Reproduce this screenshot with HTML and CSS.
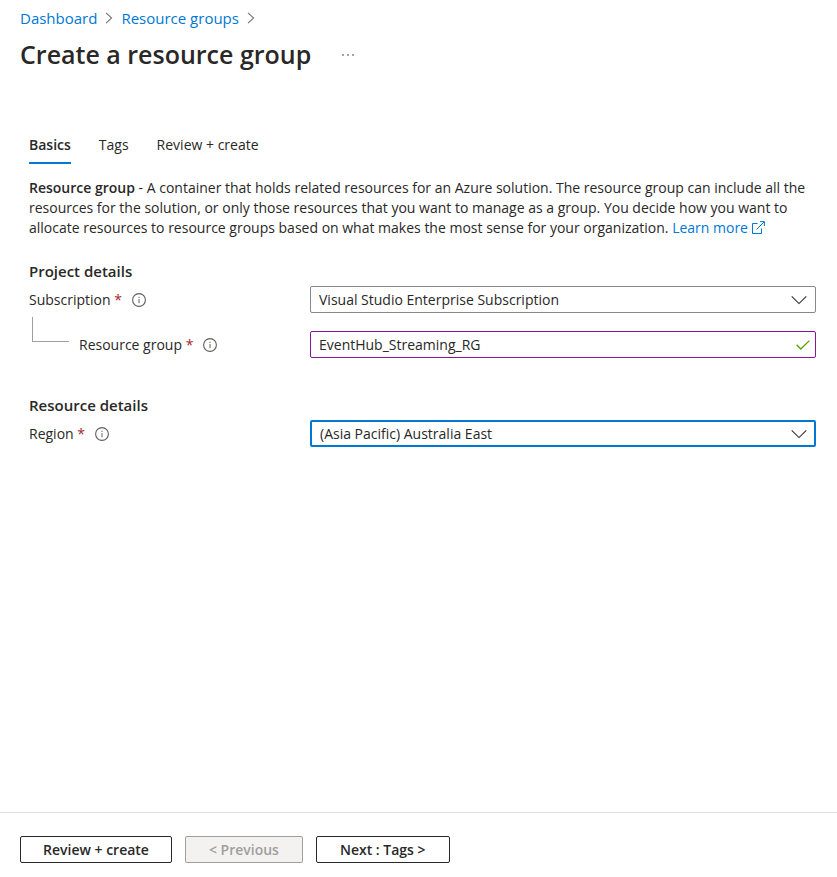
FILE: index.html
```html
<!DOCTYPE html>
<html lang="en">
<head>
    <meta charset="utf-8">
    <meta name="viewport" content="width=device-width, initial-scale=1">
    <title>Create a resource group</title>
    <link rel="stylesheet" href="styles.css">
</head>
<body>
    <!-- Shared icon shapes -->
    <svg class="icon-defs" aria-hidden="true">
        <symbol id="icon-info" viewBox="0 0 14 14">
            <circle cx="7" cy="7" r="6.4" fill="none" stroke="#605e5c" stroke-width="1.1"/>
            <path d="M7 5.9v4.3M7 3.7v1.3" fill="none" stroke="#8a8886" stroke-width="1.3"/>
        </symbol>
        <symbol id="icon-down" viewBox="0 0 16 10">
            <path d="M.7 1.4 8 8.6 15.3 1.4" fill="none" stroke="#323130" stroke-width="1.1"/>
        </symbol>
        <symbol id="icon-next" viewBox="0 0 8 12">
            <path d="M1 .8 6.6 6 1 11.2" fill="none" stroke="#797775" stroke-width="1.1"/>
        </symbol>
    </svg>

    <header class="page-header">
        <nav class="breadcrumb" aria-label="Breadcrumb">
            <a href="#">Dashboard</a>
            <svg class="icon-next"><use href="#icon-next"/></svg>
            <a href="#">Resource groups</a>
            <svg class="icon-next"><use href="#icon-next"/></svg>
        </nav>
        <div class="title-bar">
            <h1>Create a resource group</h1>
            <button type="button" class="more" aria-label="More actions">
                <svg width="14" height="4" viewBox="0 0 14 4" fill="#323130">
                    <circle cx="2" cy="3" r=".8"/>
                    <circle cx="7" cy="3" r=".8"/>
                    <circle cx="12" cy="3" r=".8"/>
                </svg>
            </button>
        </div>
    </header>

    <main class="content">
        <nav class="tabs">
            <a href="#" class="tab active">Basics</a>
            <a href="#" class="tab">Tags</a>
            <a href="#" class="tab">Review + create</a>
        </nav>

        <p class="intro"><strong>Resource group</strong> - A container that holds related resources for an Azure solution. The resource group can include all the resources for the solution, or only those resources that you want to manage as a group. You decide how you want to allocate resources to resource groups based on what makes the most sense for your organization. <a href="#">Learn more <svg class="icon-external" viewBox="0 0 13 13"><path d="M5.5 2.5h-5v10h9v-5M8 .6h4.4V5M12.2.8 4.5 8.5" fill="none" stroke="#0078d4"/></svg></a></p>

        <form id="resourceGroupForm">
            <h2>Project details</h2>
            <div class="row">
                <div class="row-label">
                    <label for="subscription">Subscription <span class="required">*</span></label>
                    <svg class="icon-info"><use href="#icon-info"/></svg>
                </div>
                <div class="field">
                    <select id="subscription" name="subscription">
                        <option>Visual Studio Enterprise Subscription</option>
                    </select>
                    <svg class="icon-down"><use href="#icon-down"/></svg>
                </div>
            </div>
            <div class="row child">
                <div class="row-label">
                    <span class="connector"></span>
                    <label for="resourceGroup">Resource group <span class="required">*</span></label>
                    <svg class="icon-info"><use href="#icon-info"/></svg>
                </div>
                <div class="field">
                    <input type="text" id="resourceGroup" name="resourceGroup" value="EventHub_Streaming_RG" class="changed">
                    <svg class="icon-check" viewBox="0 0 14 10"><path d="M.6 4.8 4.8 9 13.4.6" fill="none" stroke="#57a300" stroke-width="1.3"/></svg>
                </div>
            </div>

            <h2 class="section">Resource details</h2>
            <div class="row">
                <div class="row-label">
                    <label for="region">Region <span class="required">*</span></label>
                    <svg class="icon-info"><use href="#icon-info"/></svg>
                </div>
                <div class="field">
                    <select id="region" name="region" class="focused">
                        <option>(Asia Pacific) Australia East</option>
                    </select>
                    <svg class="icon-down"><use href="#icon-down"/></svg>
                </div>
            </div>
        </form>
    </main>

    <footer class="actions">
        <button type="submit" form="resourceGroupForm" class="review">Review + create</button>
        <button type="button" class="previous" disabled>&lt; Previous</button>
        <button type="button" class="next">Next : Tags &gt;</button>
    </footer>
</body>
</html>
```

FILE: styles.css
```css
* {
    box-sizing: border-box;
}

body {
    display: flex;
    flex-direction: column;
    min-height: 100vh;
    margin: 0;
    background: #fff;
    color: #292827;
    font-family: "Segoe UI", "Open Sans", "Noto Sans", sans-serif;
    font-size: 14px;
    line-height: 20px;
}

a {
    color: #0078d4;
    text-decoration: none;
}

svg {
    flex: none;
}

.icon-defs {
    position: absolute;
    width: 0;
    height: 0;
}

/* Header */
.page-header {
    padding: 8px 20px 0;
}

.breadcrumb {
    display: flex;
    align-items: center;
    gap: 8px;
    font-size: 15px;
}

.icon-next {
    width: 8px;
    height: 12px;
}

.title-bar {
    display: flex;
    align-items: center;
    gap: 28px;
    margin-top: 8px;
}

h1 {
    margin: 0;
    font-size: 25px;
    font-weight: 600;
    line-height: 36px;
}

.more {
    display: flex;
    padding: 4px 2px;
    border: none;
    background: none;
}

/* Tabs and form */
.content {
    flex: 1;
    padding: 63px 21px 24px 29px;
}

.tabs {
    display: flex;
    gap: 28px;
}

.tab {
    padding-bottom: 7px;
    border-bottom: 2px solid transparent;
    color: #292827;
}

.tab.active {
    border-bottom-color: #0078d4;
    font-weight: 600;
}

.intro {
    margin: 14px 0 23px;
}

strong {
    font-weight: 600;
}

.icon-external {
    width: 13px;
    height: 13px;
    vertical-align: -1px;
}

h2 {
    margin: 0 0 5px;
    font-size: 15px;
    font-weight: 600;
    line-height: 20px;
}

h2.section {
    margin-top: 37px;
}

.row {
    display: grid;
    grid-template-columns: 281px 1fr;
    align-items: center;
}

.row.child {
    margin-top: 18px;
}

.row-label {
    display: flex;
    align-items: center;
    gap: 10px;
}

.required {
    color: #a4262c;
}

.icon-info {
    width: 14px;
    height: 14px;
}

/* Elbow line from the subscription to its resource group */
.connector {
    align-self: flex-end;
    width: 37px;
    height: 25px;
    margin: 0 0 16px 3px;
    border-left: 1px solid #a19f9d;
    border-bottom: 1px solid #a19f9d;
}

.child .row-label {
    height: 27px;
}

.field {
    position: relative;
}

.field select,
.field input {
    display: block;
    width: 100%;
    height: 27px;
    padding: 0 32px 0 8px;
    border: 1px solid #8a8886;
    border-radius: 2px;
    outline: none;
    background: #fff;
    color: #292827;
    font: inherit;
    appearance: none;
}

.field .changed {
    border-color: #881798;
}

.field .focused {
    border: 2px solid #0078d4;
}

.icon-down,
.icon-check {
    position: absolute;
    top: 9px;
    right: 9px;
    width: 16px;
    height: 10px;
    pointer-events: none;
}

.icon-check {
    right: 6px;
    width: 14px;
}

/* Footer */
.actions {
    display: flex;
    gap: 13px;
    padding: 23px 20px 14px;
    border-top: 1px solid #e1dfdd;
}

.actions button {
    height: 27px;
    padding: 0 23px;
    border: 1px solid #292827;
    border-radius: 2px;
    background: #fff;
    color: #292827;
    font: inherit;
    font-weight: 600;
    line-height: 20px;
}

.actions .review {
    padding: 0 22px;
}

.actions .previous {
    border-color: #a19f9d;
    background: #f3f2f1;
    color: #a19f9d;
}
```
